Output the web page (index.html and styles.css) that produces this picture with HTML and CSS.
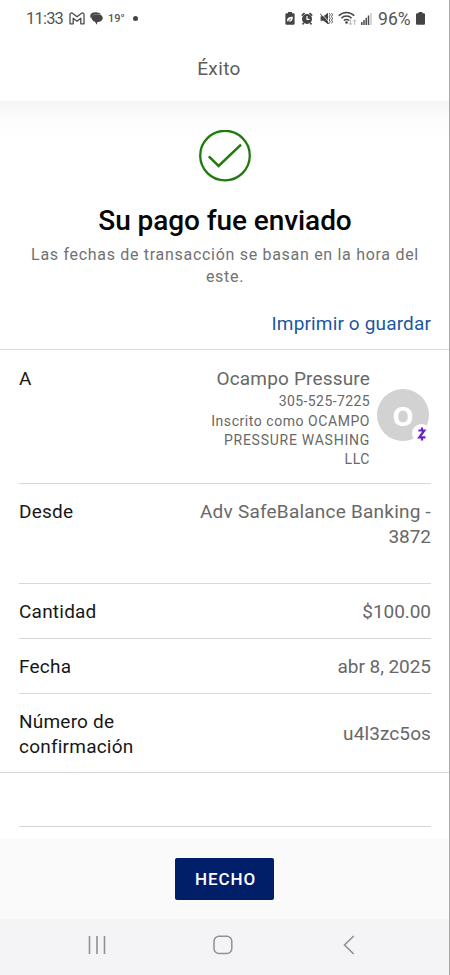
FILE: index.html
```html
<!DOCTYPE html>
<html lang="es">
<head>
<meta charset="utf-8">
<title>Éxito</title>
<link rel="stylesheet" href="styles.css">
</head>
<body>
<div class="screen">
  <div class="status">
    <span class="clock">11:33</span>
    <svg class="i-mail" width="16" height="13" viewBox="0 0 16 13"><path d="M1 2.6V11.8H4.2V6.2L8 9.2L11.8 6.2V11.8H15V2.6C15 .8 13.2 .6 12.2 1.4L8 4.8L3.8 1.4C2.8 .6 1 .8 1 2.6Z" fill="none" stroke="#4b4b4b" stroke-width="1.3" stroke-linejoin="round"/></svg>
    <svg class="i-chat" width="13" height="13" viewBox="0 0 13 13"><path d="M5.5 .3C2.3 .3 .2 1.8 .2 4C.2 5.1 .7 6 1.5 6.7C1.5 3.8 4 2 7.5 2C9 2 10.2 2.3 11.2 2.8C10.5 1.2 8.5 .3 5.5 .3Z" fill="#444"/><path d="M7.3 2.2C4 2.2 1.7 3.7 1.7 6.1C1.7 8 3 9.2 5 9.8L6.8 12.7L7.5 10.1C10.8 10 12.8 8.5 12.8 6.1C12.8 3.7 10.7 2.2 7.3 2.2Z" fill="#444"/></svg>
    <span class="temp">19°</span>
    <span class="dot"></span>
    <span class="grow"></span>
    <svg class="i-eco" width="10" height="13" viewBox="0 0 10 13"><path d="M3 0H7V1.2H8.5Q9.6 1.2 9.6 2.3V11.7Q9.6 12.8 8.5 12.8H1.5Q.4 12.8 .4 11.7V2.3Q.4 1.2 1.5 1.2H3Z" fill="#444"/><path d="M2.2 9.7C1.5 6 4 4.9 7.8 4.8C8 8.6 6.3 10.2 3.3 9.3Z" fill="#fff"/><path d="M2.5 9.8L6 6.8" stroke="#444" stroke-width=".8"/></svg>
    <svg class="i-alarm" width="12" height="13" viewBox="0 0 12 13"><circle cx="6" cy="7" r="5" fill="#444"/><path d="M.8 3.6L3.5 1M8.5 1L11.2 3.6M2.8 11L1.5 12.3M9.2 11L10.5 12.3" stroke="#444" stroke-width="1.7"/><path d="M6 4V7.4H8.6" fill="none" stroke="#fff" stroke-width="1.2"/></svg>
    <svg class="i-mute" width="13" height="13" viewBox="0 0 13 13"><path d="M.6 4.2H3.6L8 .8V12.2L3.6 8.8H.6Z" fill="#444"/><path d="M.9 .9L10 11.2" stroke="#fff" stroke-width=".8"/><path d="M0 1.5L9 12" stroke="#444"/><path d="M9.3 1.2L10.2 2.9L9.3 4.6L10.2 6.3L9.3 8L10.2 9.7L9.3 11.4M11.6 1.2L12.5 2.9L11.6 4.6L12.5 6.3L11.6 8L12.5 9.7L11.6 11.4" fill="none" stroke="#555"/></svg>
    <svg class="i-wifi" width="19" height="15" viewBox="0 0 19 15"><path d="M.8 4.7C5 .3 12 .3 16.2 4.7M3.4 7.2C6 4.3 11 4.3 13.6 7.2M5.8 9.5C7.3 8 9.7 8 11.2 9.5" fill="none" stroke="#444" stroke-width="1.5"/><circle cx="8.5" cy="11.5" r="1.3" fill="#444"/><path d="M12.5 8.5V13.8M10.9 12.2L12.5 13.9L14.1 12.2M16.7 14V9M15.1 10.5L16.7 8.8L18.3 10.5" fill="none" stroke="#b5b5b5"/></svg>
    <svg class="i-signal" width="11" height="12" viewBox="0 0 11 12"><path d="M.8 9V12M3 7V12M5.2 4.8V12M7.5 2.5V12" stroke="#4b4b4b" stroke-width="1.5"/><path d="M10 0V12" stroke="#ccc" stroke-width="1.6"/></svg>
    <span class="percent">96%</span>
    <svg class="i-batt" width="9" height="13" viewBox="0 0 9 13"><path d="M2.6 0H6.4V1.2H7.9Q9 1.2 9 2.3V11.7Q9 12.8 7.9 12.8H1.1Q0 12.8 0 11.7V2.3Q0 1.2 1.1 1.2H2.6Z" fill="#444"/></svg>
  </div>
  <header class="header">Éxito</header>
  <main class="main">
    <section class="hero">
      <svg class="check" width="52" height="52" viewBox="0 0 52 52"><circle cx="26" cy="25.6" r="24.8" fill="none" stroke="#217a0d" stroke-width="2.3"/><path d="M9.8 26.4L19.6 36L42 14.6" fill="none" stroke="#217a0d" stroke-width="2.5"/></svg>
      <h1 class="title">Su pago fue enviado</h1>
      <p class="note">Las fechas de transacción se basan en la hora del<br>este.</p>
      <a class="print">Imprimir o guardar</a>
    </section>
    <section class="details">
      <div class="row payee">
        <span class="label">A</span>
        <div class="person">
          <div class="value name">Ocampo Pressure</div>
          <div class="phone">305-525-7225</div>
          <div class="alias">Inscrito como OCAMPO<br><span class="wide">PRESSURE WASHING</span><br>LLC</div>
        </div>
        <div class="avatar">O
          <span class="badge"><svg width="10" height="14" viewBox="0 0 10 14"><path d="M1.4 3.5H7.3L2.3 10.3H8.5M5 .4V3.5M5 10.3V13.6" fill="none" stroke="#6b20c5" stroke-width="2.2"/></svg></span>
        </div>
      </div>
      <div class="row from"><span class="label">Desde</span><span class="value account">Adv SafeBalance Banking -<br><span class="figure">3872</span></span></div>
      <div class="row"><span class="label">Cantidad</span><span class="value figure">$100.00</span></div>
      <div class="row"><span class="label">Fecha</span><span class="value figure">abr 8, 2025</span></div>
      <div class="row confirm"><span class="label">Número de<br>confirmación</span><span class="value code">u4l3zc5os</span></div>
    </section>
    <div class="blank"></div>
  </main>
  <footer class="actions"><button class="done">HECHO</button></footer>
  <nav class="nav">
    <svg width="18" height="20" viewBox="0 0 18 20"><path d="M1.5 1V19M9 1V19M16.5 1V19" stroke="#919193" stroke-width="1.6"/></svg>
    <svg width="20" height="20" viewBox="0 0 20 20"><rect x="1" y="1.2" width="17.8" height="17.3" rx="5" fill="none" stroke="#919193" stroke-width="1.5"/></svg>
    <svg width="12" height="20" viewBox="0 0 12 20"><path d="M10.7 1L1.5 10L10.7 19" fill="none" stroke="#919193" stroke-width="1.6"/></svg>
  </nav>
</div>
</body>
</html>
```
FILE: styles.css
```css
* { box-sizing: border-box; }
body { margin: 0; background: #fff; font-family: Roboto, "Liberation Sans", sans-serif; }
.screen { width: 450px; height: 975px; display: flex; flex-direction: column; border-right: 1px solid #aaa; overflow: hidden; white-space: nowrap; }

.status { height: 37px; padding: 0 24px 0 26px; display: flex; align-items: center; color: #555; flex: none; }
.status svg, .status span { flex: none; }
.clock { font-size: 16.5px; letter-spacing: -0.8px; width: 43px; }
.i-chat { margin-left: 5px; }
.temp { font-size: 11px; font-weight: 500; margin-left: 5px; width: 17px; }
.dot { width: 5px; height: 5px; border-radius: 50%; background: #444; margin-left: 8px; }
.status .grow { flex: 1; }
.i-alarm { margin-left: 6.5px; }
.i-mute { margin-left: 6.5px; }
.i-wifi { margin-left: 5.5px; }
.i-signal { margin-left: 4px; }
.percent { font-size: 17.5px; letter-spacing: 0.1px; margin-left: 6px; width: 37px; }
.i-batt { margin-left: 1px; }

.header { height: 64px; flex: none; display: flex; align-items: center; justify-content: center; padding: 0 11px 2px 0; font-size: 19px; letter-spacing: 0.4px; color: #5c5c5c; }

.main { height: 738px; flex: none; background: linear-gradient(#f5f5f5, #fcfcfc 16px, #fefefe 34px, #fff 36px); }
.hero { height: 249px; padding-top: 28.5px; display: flex; flex-direction: column; align-items: center; border-bottom: 1px solid #dadada; }
.check { flex: none; }
.title { margin: 21.5px 0 0 1px; font-size: 28px; line-height: 36px; font-weight: 500; letter-spacing: -0.08px; color: #060606; }
.note { margin: 5px 0 0 1px; font-size: 16px; line-height: 22px; letter-spacing: 0.7px; color: #727272; text-align: center; }
.print { align-self: flex-end; margin: 23px 18px 0 0; font-size: 19px; line-height: 25px; letter-spacing: 0.15px; color: #1a58a0; }

.details { border-bottom: 1px solid #d8d8d8; }
.row { height: 55px; margin: 0 18px 0 19px; display: flex; justify-content: space-between; align-items: center; border-bottom: 1px solid #d8d8d8; font-size: 19px; line-height: 25px; letter-spacing: 0.22px; }
.label { color: #171717; }
.value { color: #686868; text-align: right; }
.figure { letter-spacing: -0.05px; }
.code { letter-spacing: 0.1px; }
.payee { height: 134px; align-items: flex-start; padding-top: 16px; }
.person { margin-left: auto; text-align: right; color: #686868; font-size: 14px; line-height: 19px; letter-spacing: 0.55px; }
.name { font-size: 19px; line-height: 25px; letter-spacing: 0.17px; }
.phone { margin: 1px 0; letter-spacing: 0.4px; }
.wide { letter-spacing: 0.75px; }
.avatar { position: relative; width: 52px; height: 52px; border-radius: 50%; margin: 23px 2px 0 7px; background: #d2d2d2; color: #fff; display: flex; align-items: center; justify-content: center; font: 700 27px "Noto Sans", "Open Sans", sans-serif; }
.badge { position: absolute; left: 35px; top: 35px; width: 19px; height: 19px; border-radius: 50%; background: #fff; display: flex; align-items: center; justify-content: center; }
.from { height: 100px; align-items: flex-start; padding-top: 15px; }
.confirm { height: 78px; padding-top: 1px; border-bottom: 0; }
.blank { height: 54px; margin: 0 18px 0 19px; border-bottom: 1px solid #d4d4d4; }

.actions { height: 80px; flex: none; background: #fafafa; display: flex; justify-content: center; align-items: center; }
.done { width: 99px; height: 42px; padding: 0 0 0 2px; border: 0; border-radius: 2px; background: #011f68; color: #fff; font: 500 17px Roboto, sans-serif; letter-spacing: 0.9px; }
.nav { height: 56px; flex: none; background: #f4f4f6; display: flex; align-items: center; padding: 0 0 4px 88px; }
.nav svg + svg { margin-left: 107px; }
.nav svg + svg + svg { margin-left: 110px; }
```
